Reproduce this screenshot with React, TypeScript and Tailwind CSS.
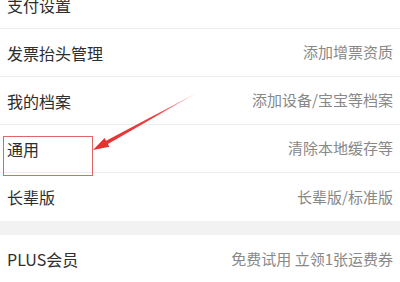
import React from 'react';

const rows: { left: string; right: string }[] = [
  { left: '支付设置', right: '' },
  { left: '发票抬头管理', right: '添加增票资质' },
  { left: '我的档案', right: '添加设备/宝宝等档案' },
  { left: '通用', right: '清除本地缓存等' },
  { left: '长辈版', right: '长辈版/标准版' },
];

const font = { fontFamily: '"Noto Sans CJK SC", "Noto Sans", sans-serif' };

const Row: React.FC<{ left: string; right: string; last?: boolean }> = ({ left, right, last }) => (
  <div className={`flex h-[48px] items-center justify-between px-[7px] ${last ? '' : 'border-b border-[#ececec]'}`}>
    <span className="text-[16px] text-[#2e2e2e]">{left}</span>
    <span className="text-[15px] text-[#888888]">{right}</span>
  </div>
);

const App: React.FC = () => {
  return (
    <div className="relative h-[282px] w-[400px] overflow-hidden bg-white" style={font}>
      <div className="-mt-[19px] bg-white">
        {rows.map((r, i) => (
          <Row key={r.left} left={r.left} right={r.right} last={i === rows.length - 1} />
        ))}
      </div>
      <div className="h-[14px] bg-[#f2f2f2]" />
      <Row left="PLUS会员" right="免费试用 立领1张运费券" last />

      <div className="absolute left-[3px] top-[136px] h-[40px] w-[90px] border border-[#e06666]" />
      <svg className="absolute left-0 top-0" width="400" height="282" viewBox="0 0 400 282">
        <defs>
          <linearGradient id="arr" x1="197" y1="93" x2="93" y2="150" gradientUnits="userSpaceOnUse">
            <stop offset="0" stopColor="#f08080" stopOpacity="0.5" />
            <stop offset="0.4" stopColor="#e84040" />
            <stop offset="1" stopColor="#e62e2e" />
          </linearGradient>
        </defs>
        <polygon
          points="93,150 104.6,137.9 106.1,140.7 197,92.8 107.9,143.9 109.4,146.7"
          fill="url(#arr)"
        />
      </svg>
    </div>
  );
};

export default App;
